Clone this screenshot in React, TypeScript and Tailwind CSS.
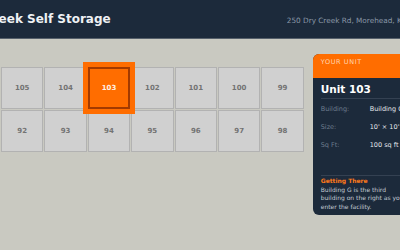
const topRow = ["105", "104", "103", "102", "101", "100", "99"];
const bottomRow = ["92", "93", "94", "95", "96", "97", "98"];

const details = [
  { label: "Building:", value: "Building G" },
  { label: "Size:", value: "10' × 10'" },
  { label: "Sq Ft:", value: "100 sq ft" },
];

function Cell({ num, active }: { num: string; active?: boolean }) {
  if (active) {
    return (
      <div className="relative z-10 flex items-center justify-center bg-[#ff6d00] border-2 border-[#a33a00] shadow-[0_0_0_5px_#ff6d00] text-[7px] font-bold text-[#fff1e6]">
        {num}
      </div>
    );
  }
  return (
    <div className="flex items-center justify-center bg-[#d0d0d0] border border-[#b2b2b2] text-[7px] font-bold text-[#737373]">
      {num}
    </div>
  );
}

export default function App() {
  return (
    <div className="w-screen h-screen overflow-hidden bg-[#c9c9c1] font-['DejaVu_Sans',sans-serif]">
      {/* HEADER */}
      <header className="h-[39px] flex items-center bg-[#1c2a3b] border-b border-[#56606b]">
        <h1 className="ml-[-44px] shrink-0 whitespace-nowrap text-[12px] font-bold text-[#eef1f4]">
          Dry Creek Self Storage
        </h1>
        <span className="ml-auto mr-[-6px] mt-[5px] shrink-0 whitespace-nowrap text-[7.3px] text-[#8b98a8]">
          250 Dry Creek Rd, Morehead, KY
        </span>
      </header>

      <main className="flex items-start pt-[15px] pl-[1px]">
        {/* MAP GRID */}
        <div className="mt-[13px] grid grid-cols-[repeat(7,42.4px)] grid-rows-[repeat(2,42px)] gap-px shrink-0">
          {topRow.map((n) => (
            <Cell key={n} num={n} active={n === "103"} />
          ))}
          {bottomRow.map((n) => (
            <Cell key={n} num={n} />
          ))}
        </div>

        {/* UNIT PANEL */}
        <aside className="ml-[9px] w-[104px] shrink-0 rounded-[6px] bg-[#1c2a3b]">
          <div className="h-[24px] rounded-t-[6px] bg-[#ff6d00] pl-[8px] pt-[4px] text-[6.5px] tracking-[0.6px] text-[#ffd6b3] leading-[8px] whitespace-nowrap">
            YOUR UNIT
          </div>
          <div className="px-[8px]">
            <div className="pt-[5px] pb-[2px] border-b border-[#344152] text-[10.5px] leading-[13px] font-bold text-white whitespace-nowrap">
              Unit 103
            </div>
            <div className="pt-[2px]">
              {details.map((d) => (
                <div key={d.label} className="h-[18px] flex items-center text-[6.5px] whitespace-nowrap">
                  <span className="w-[49px] shrink-0 text-[#6d7c8e]">{d.label}</span>
                  <span className="text-[#e4e8ec]">{d.value}</span>
                </div>
              ))}
            </div>
            <div className="mt-[20px] pt-[1px] pb-[4px] border-t border-[#344152] text-[6px] leading-[8.5px]">
              <div className="font-bold text-[#ff7a1a]">Getting There</div>
              <p className="text-[#c3cad3]">
                Building G is the third building on the right as you enter the facility.
              </p>
            </div>
          </div>
        </aside>
      </main>
    </div>
  );
}
